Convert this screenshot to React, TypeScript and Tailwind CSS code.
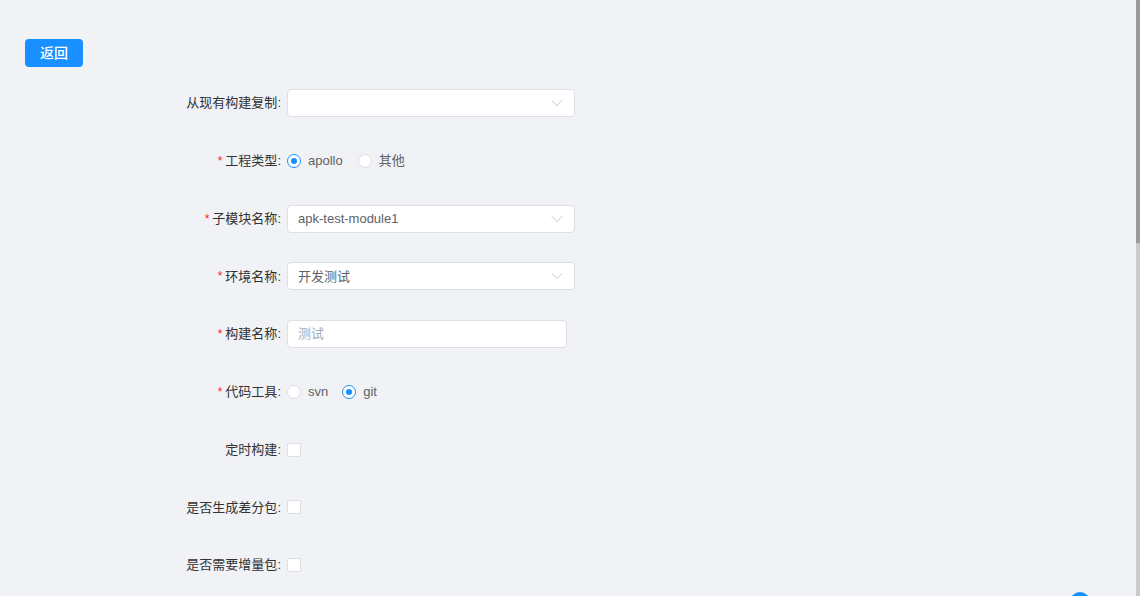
import { ReactNode } from "react";

const font = { fontFamily: '"Liberation Sans", "Noto Sans CJK SC", sans-serif' };

function Chevron() {
  return (
    <svg width="12" height="12" viewBox="0 0 12 12" fill="none" stroke="#c0c4cc" strokeWidth="1" strokeLinecap="round" strokeLinejoin="round">
      <polyline points="1 3.5 6 8.5 11 3.5" />
    </svg>
  );
}

function Radio({ checked, label }: { checked?: boolean; label: string }) {
  return (
    <label className="flex items-center gap-[7px] cursor-pointer">
      <span
        className={`w-[14px] h-[14px] rounded-full border bg-white flex items-center justify-center ${
          checked ? "border-[#1890ff]" : "border-[#dcdfe6]"
        }`}
      >
        {checked && <span className="w-[6px] h-[6px] rounded-full bg-[#1890ff]" />}
      </span>
      <span className="text-[13px] text-[#606266]">{label}</span>
    </label>
  );
}

function Select({ value, w = "w-[288px]" }: { value?: string; w?: string }) {
  return (
    <div className={`${w} h-[28px] bg-white border border-[#dcdfe6] rounded-[4px] flex items-center justify-between pl-[10px] pr-[11px]`}>
      <span className="text-[13px] text-[#606266]">{value}</span>
      <Chevron />
    </div>
  );
}

function Checkbox() {
  return <span className="block w-[14px] h-[14px] bg-white border border-[#dcdfe6] rounded-[2px]" />;
}

function Row({ label, required, children }: { label: string; required?: boolean; children: ReactNode }) {
  return (
    <div className="flex items-center h-[28px]">
      <div className="w-[287px] shrink-0 flex items-center justify-end pr-[6px] text-[13px] text-[#303133]">
        {required && <span className="text-[#f5222d] mr-[3px] text-[12px]">*</span>}
        <span>{label}:</span>
      </div>
      {children}
    </div>
  );
}

export default function App() {
  return (
    <div className="h-[596px] w-[1140px] bg-[#f0f2f5] flex overflow-hidden relative" style={font}>
      <div className="flex-1 flex flex-col pt-[39px]">
        <div className="pl-[25px]">
          <button className="w-[58px] h-[28px] rounded-[4px] bg-[#1890ff] text-white text-[14px] font-medium flex items-center justify-center">
            返回
          </button>
        </div>

        <div className="mt-[22px] flex flex-col gap-[29.75px]">
          <Row label="从现有构建复制">
            <Select />
          </Row>
          <Row label="工程类型" required>
            <div className="flex items-center gap-[15px]">
              <Radio checked label="apollo" />
              <Radio label="其他" />
            </div>
          </Row>
          <Row label="子模块名称" required>
            <Select value="apk-test-module1" />
          </Row>
          <Row label="环境名称" required>
            <Select value="开发测试" />
          </Row>
          <Row label="构建名称" required>
            <div className="w-[280px] h-[28px] bg-white border border-[#dcdfe6] rounded-[4px] flex items-center pl-[10px]">
              <span className="text-[13px] text-[#a8abb2]">测试</span>
            </div>
          </Row>
          <Row label="代码工具" required>
            <div className="flex items-center gap-[14px]">
              <Radio label="svn" />
              <Radio checked label="git" />
            </div>
          </Row>
          <Row label="定时构建">
            <Checkbox />
          </Row>
          <Row label="是否生成差分包">
            <Checkbox />
          </Row>
          <Row label="是否需要增量包">
            <Checkbox />
          </Row>
        </div>
      </div>

      {/* scrollbar */}
      <div className="w-[4px] h-full bg-[#c9cacd] flex flex-col">
        <div className="h-[243px] bg-[#999a9c]" />
      </div>

      {/* back-to-top button peeking from the bottom */}
      <div className="absolute left-[1070px] top-[592px] w-[20px] h-[20px] rounded-full bg-[#1890ff]" />
    </div>
  );
}
